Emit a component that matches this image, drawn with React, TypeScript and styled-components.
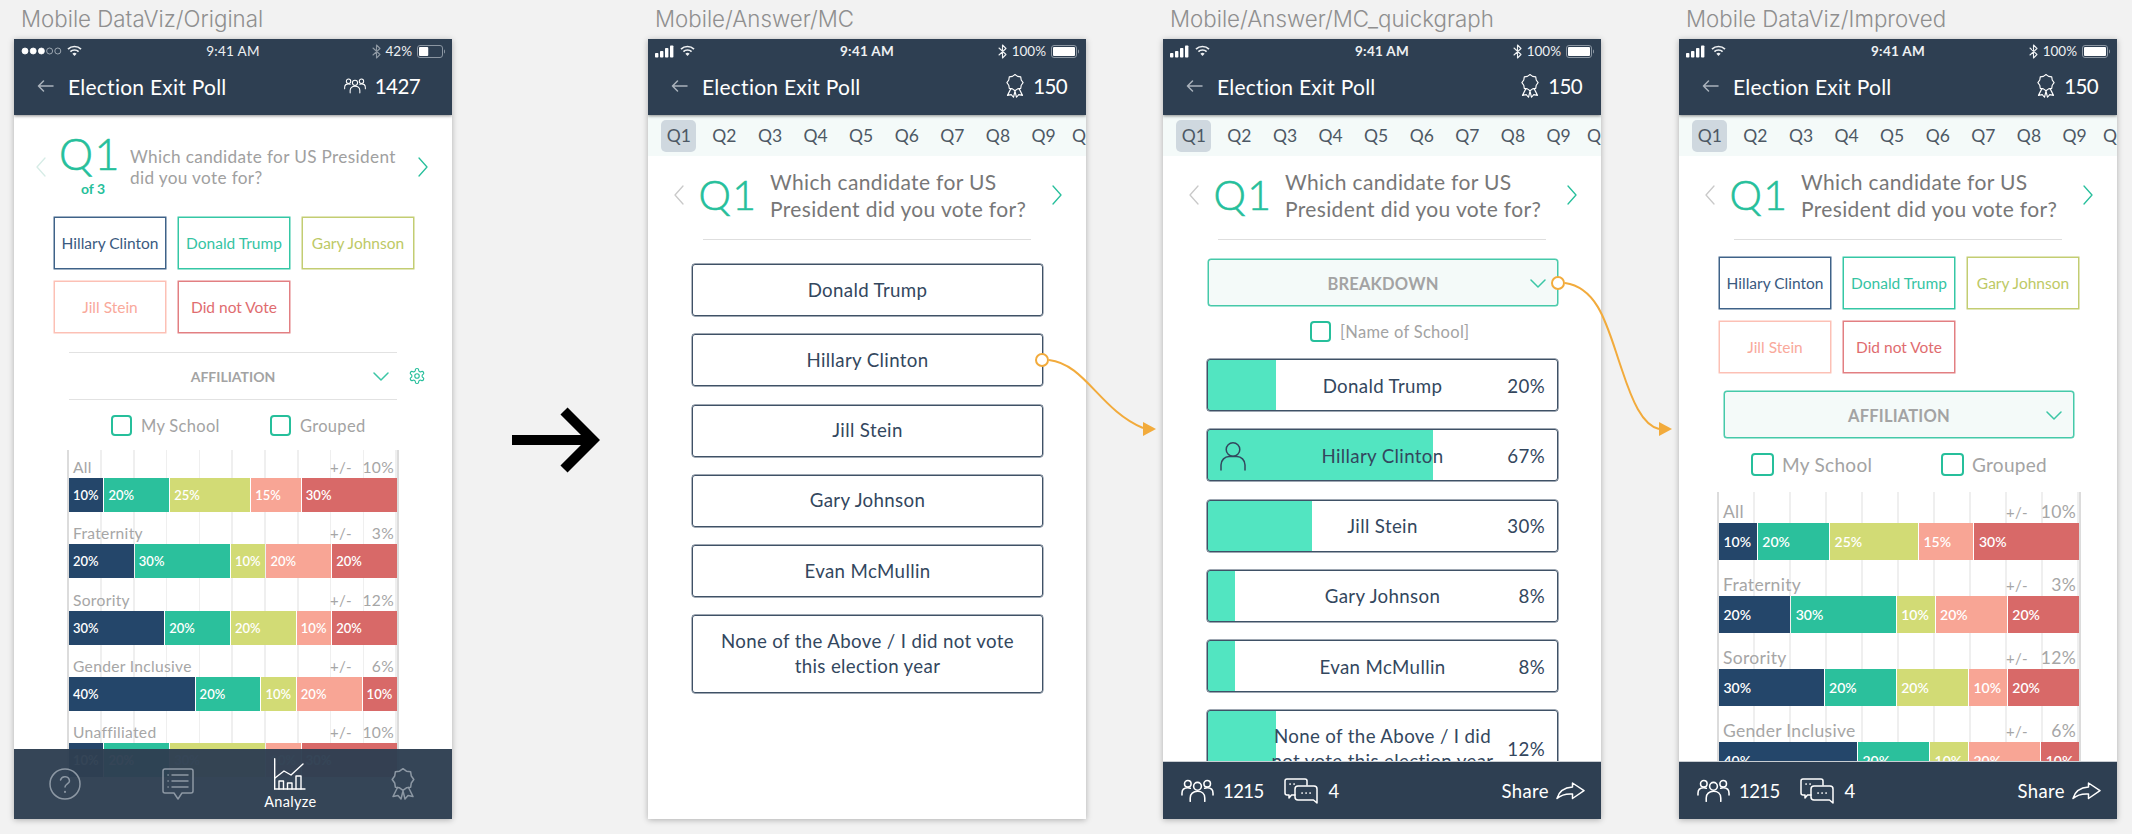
import React from 'react';
import styled, { createGlobalStyle } from 'styled-components';

const GlobalStyle = createGlobalStyle`
  html, body {
    margin: 0;
    padding: 0;
    background: #f2f2f2;
    font-family: 'Lato', 'Liberation Sans', sans-serif;
  }
  * { box-sizing: border-box; }
`;

const NAVY = '#2e3f52';
const TEAL = '#26bf9b';
const ORANGE = '#f2ab3c';

const Page = styled.div`
  position: relative;
  width: 2132px;
  height: 834px;
  overflow: hidden;
  display: flex;
  padding-left: 14px;
  background: #f2f2f2;
`;

const Column = styled.div<{ $gap?: number }>`
  width: 438px;
  flex: none;
  margin-left: ${({ $gap }) => $gap || 0}px;
`;

const BoardLabel = styled.div`
  height: 39px;
  padding: 7px 0 0 7px;
  font-family: 'Inter', sans-serif;
  font-size: 22.3px;
  font-weight: 300;
  line-height: 24px;
  color: #8f8f8f;
  white-space: nowrap;
`;

const Artboard = styled.div`
  position: relative;
  height: 780px;
  background: #fff;
  box-shadow: 0 1px 6px rgba(0, 0, 0, 0.28);
  display: flex;
  flex-direction: column;
  overflow: hidden;
`;

const BigArrowSlot = styled.div`
  width: 196px;
  flex: none;
  display: flex;
  justify-content: center;
  padding: 407px 0 0 11px;
`;

const Overlay = styled.svg`
  position: absolute;
  left: 0;
  top: 0;
  pointer-events: none;
`;

const Header = styled.div`
  height: 76px;
  flex: none;
  background: ${NAVY};
  box-shadow: 0 1px 3px rgba(0, 0, 0, 0.45);
  position: relative;
  z-index: 2;
  color: #fff;
`;

const StatusBar = styled.div`
  height: 24px;
  padding: 0 7px;
  display: grid;
  grid-template-columns: 1fr auto 1fr;
  align-items: center;
  font-size: 13.5px;
  color: #eef1f3;
`;

const StatusGroup = styled.div<{ $right?: boolean }>`
  display: flex;
  align-items: center;
  gap: 5px;
  justify-content: ${({ $right }) => ($right ? 'flex-end' : 'flex-start')};
`;

const Time = styled.span<{ $strong?: boolean }>`
  font-weight: ${({ $strong }) => ($strong ? 700 : 400)};
  letter-spacing: 0.3px;
`;

const TitleRow = styled.div<{ $wide?: boolean }>`
  height: 46px;
  display: flex;
  align-items: center;
  padding: 0 ${({ $wide }) => ($wide ? 32 : 19)}px 0 23px;
`;

const BackSlot = styled.div`
  width: 31px;
  color: #aab3bc;
  display: flex;
`;

const Title = styled.div`
  flex: 1;
  font-size: 21px;
  letter-spacing: 0.25px;
`;

const Score = styled.div`
  display: flex;
  align-items: center;
  gap: 9px;
  font-size: 20.5px;
  letter-spacing: -0.6px;
`;

const TabStrip = styled.div`
  height: 41px;
  flex: none;
  background: #f4faf9;
  display: flex;
  align-items: center;
  padding-left: 8px;
  overflow: hidden;
`;

const Tab = styled.div`
  width: 45.6px;
  flex: none;
  display: flex;
  justify-content: center;
`;

const TabLabel = styled.span<{ $active?: boolean }>`
  width: 35px;
  height: 32px;
  flex: none;
  display: flex;
  align-items: center;
  justify-content: center;
  border-radius: 5px;
  font-size: 17.5px;
  white-space: nowrap;
  color: #4d5864;
  background: ${({ $active }) => ($active ? '#cfd8df' : 'transparent')};
`;

const Body = styled.div`
  flex: 1;
  min-height: 0;
  overflow: hidden;
`;

const QuestionRow = styled.div<{ $compact?: boolean }>`
  display: grid;
  align-items: center;
  grid-template-columns: ${({ $compact }) => ($compact ? '28px 66px 1fr 34px' : '28px 68px 1fr 34px')};
  padding: ${({ $compact }) => ($compact ? '22px 0 20px 22px' : '0 0 5px 26px')};
  height: ${({ $compact }) => ($compact ? '102px' : '83px')};
`;

const QBlock = styled.div`
  display: flex;
  flex-direction: column;
  align-items: center;
  width: 52px;
  color: ${TEAL};
`;

const QNumber = styled.div<{ $compact?: boolean }>`
  font-size: ${({ $compact }) => ($compact ? 43 : 41)}px;
  line-height: 44px;
  font-weight: 300;
  -webkit-text-stroke: 0.6px ${TEAL};
  letter-spacing: 1.5px;
  margin-top: ${({ $compact }) => ($compact ? -6 : 0)}px;
`;

const OfTotal = styled.div`
  font-size: 14px;
  line-height: 16px;
  font-weight: 700;
  padding-left: 6px;
  margin-top: 5px;
`;

const QuestionText = styled.div<{ $compact?: boolean }>`
  font-size: ${({ $compact }) => ($compact ? 17.2 : 21)}px;
  line-height: ${({ $compact }) => ($compact ? 21 : 27)}px;
  letter-spacing: 0.35px;
  white-space: pre-line;
  color: ${({ $compact }) => ($compact ? '#a0a0a0' : '#777')};
`;

const Divider = styled.div`
  height: 1px;
  margin: 0 55px;
  background: #dedede;
`;

const ChipGrid = styled.div<{ $top: number }>`
  display: grid;
  grid-template-columns: repeat(3, 112px);
  grid-auto-rows: 52px;
  gap: 12px;
  padding-left: 40px;
  margin-top: ${({ $top }) => $top}px;
`;

const Chip = styled.div<{ $border: string; $text: string }>`
  display: flex;
  align-items: center;
  justify-content: center;
  border: 1px solid ${({ $border }) => $border};
  box-shadow: 0 0 0 0.5px ${({ $border }) => $border};
  color: ${({ $text }) => $text};
  font-size: 15.5px;
  white-space: nowrap;
`;

const LineSelectRow = styled.div`
  display: flex;
  align-items: center;
  margin: 19px 0 0 55px;
`;

const LineSelect = styled.div`
  width: 328px;
  height: 48px;
  padding: 0 8px;
  border-top: 1.5px solid #e2e2e2;
  border-bottom: 1.5px solid #e2e2e2;
  display: grid;
  grid-template-columns: 1fr auto 1fr;
  align-items: center;
  font-size: 14px;
  font-weight: 700;
  color: #a3a3a3;
`;

const ChevronSlot = styled.div`
  justify-self: end;
  display: flex;
`;

const GearSlot = styled.div`
  margin-left: 11px;
  color: ${TEAL};
  display: flex;
`;

const BoxSelect = styled.div<{ $top: number }>`
  height: 47px;
  margin: ${({ $top }) => $top}px 43px 0 45px;
  padding: 2px 11px 0;
  background: #f4faf9;
  border: 1px solid #45c9a9;
  box-shadow: 0 0 0 0.5px #45c9a9;
  border-radius: 3px;
  display: grid;
  grid-template-columns: 1fr auto 1fr;
  align-items: center;
  font-size: 16.5px;
  font-weight: 700;
  letter-spacing: 0.2px;
  color: #a3a3a3;
`;

const CheckRow = styled.div<{ $left: number; $top: number; $gap?: number }>`
  display: flex;
  align-items: center;
  gap: ${({ $gap }) => $gap || 0}px;
  padding-left: ${({ $left }) => $left}px;
  margin-top: ${({ $top }) => $top}px;
`;

const CheckItem = styled.label<{ $large?: boolean; $width?: number }>`
  display: flex;
  align-items: center;
  gap: ${({ $large }) => ($large ? 8 : 9)}px;
  width: ${({ $width }) => ($width ? `${$width}px` : 'auto')};
  font-size: ${({ $large }) => ($large ? 19 : 16.5)}px;
  letter-spacing: 0.3px;
  white-space: nowrap;
  color: #a3a3a3;
`;

const CheckBox = styled.span<{ $large?: boolean }>`
  width: ${({ $large }) => ($large ? 23 : 21)}px;
  height: ${({ $large }) => ($large ? 23 : 21)}px;
  flex: none;
  border: 2px solid ${TEAL};
  border-radius: 4px;
`;

const Chart = styled.div<{ $large?: boolean; $top: number }>`
  width: ${({ $large }) => ($large ? 364 : 332)}px;
  margin: ${({ $top }) => $top}px 0 0 ${({ $large }) => ($large ? 38 : 53)}px;
  border-left: 2px solid #dcdcdc;
  border-right: 2px solid #dcdcdc;
  background: repeating-linear-gradient(
    90deg,
    transparent 0,
    transparent ${({ $large }) => ($large ? 34.5 : 31.3)}px,
    #efefef ${({ $large }) => ($large ? 34.5 : 31.3)}px,
    #efefef ${({ $large }) => ($large ? 36 : 32.8)}px
  );
`;

const ChartRow = styled.div``;

const RowHead = styled.div<{ $large?: boolean; $first?: boolean }>`
  height: ${({ $large, $first }) => ($large ? ($first ? 31 : 36) : $first ? 28 : 32.3)}px;
  padding: 0 3px 0 4px;
  display: flex;
  align-items: flex-end;
  font-size: ${({ $large }) => ($large ? 17.5 : 15.6)}px;
  line-height: 22px;
  letter-spacing: 0.3px;
  color: #a6a6a6;
`;

const RowName = styled.span`
  flex: 1;
  white-space: nowrap;
`;

const RowMargin = styled.span<{ $large?: boolean }>`
  width: ${({ $large }) => ($large ? 34 : 32)}px;
  font-size: 15px;
`;

const RowValue = styled.span<{ $large?: boolean }>`
  width: ${({ $large }) => ($large ? 36 : 32)}px;
  text-align: right;
`;

const Bar = styled.div<{ $large?: boolean }>`
  height: ${({ $large }) => ($large ? 37 : 34)}px;
  display: flex;
  gap: 1px;
`;

const Segment = styled.div<{ $share: number; $color: string; $large?: boolean }>`
  flex: ${({ $share }) => $share} 0 0;
  min-width: 0;
  background: ${({ $color }) => $color};
  display: flex;
  align-items: center;
  padding-left: ${({ $large }) => ($large ? 4.5 : 4)}px;
  font-size: ${({ $large }) => ($large ? 14 : 13)}px;
  font-weight: 600;
  color: #fff;
  white-space: nowrap;
`;

const CardList = styled.div<{ $top: number }>`
  display: flex;
  flex-direction: column;
  gap: 18.3px;
  margin: ${({ $top }) => $top}px 0 0 44px;
  width: 351px;
`;

const AnswerCard = styled.div<{ $tall?: boolean }>`
  height: ${({ $tall }) => ($tall ? 78 : 52)}px;
  padding: 0 22px;
  display: flex;
  align-items: center;
  justify-content: center;
  text-align: center;
  border: 1px solid #3f5166;
  box-shadow: 0 0 0 0.4px #3f5166;
  border-radius: 3px;
  font-size: 18.7px;
  line-height: 25px;
  letter-spacing: 0.35px;
  color: #33475e;
`;

const ResultCard = styled.div<{ $fill: number; $tall?: boolean }>`
  flex: none;
  height: ${({ $tall }) => ($tall ? 76 : 52)}px;
  padding: 2px 12px 0;
  display: grid;
  grid-template-columns: 1fr auto 1fr;
  align-items: center;
  border: 1px solid #3f5166;
  box-shadow: 0 0 0 0.5px #3f5166;
  border-radius: 3px;
  background: linear-gradient(90deg, #52e5c1 ${({ $fill }) => $fill}%, #fff ${({ $fill }) => $fill}%);
  font-size: 18.7px;
  line-height: 25px;
  letter-spacing: 0.35px;
  color: #33475e;
`;

const ResultName = styled.div`
  max-width: 224px;
  text-align: center;
`;

const ResultPct = styled.div`
  grid-column: 3;
  justify-self: end;
`;

const PersonSlot = styled.div`
  display: flex;
  color: #33475e;
`;

const TabBar = styled.div`
  position: absolute;
  left: 0;
  right: 0;
  bottom: 0;
  height: 70px;
  padding: 0 33px 0 35px;
  background: rgba(46, 63, 82, 0.97);
  display: flex;
  align-items: center;
  justify-content: space-between;
  color: #8d98a4;
`;

const TabItem = styled.div<{ $active?: boolean }>`
  width: 32px;
  display: flex;
  flex-direction: column;
  align-items: center;
  color: ${({ $active }) => ($active ? '#fff' : 'inherit')};
`;

const TabCaption = styled.div`
  margin-top: 3px;
  font-size: 14.5px;
  line-height: 17px;
  letter-spacing: 0.3px;
`;

const Footer = styled.div`
  height: 58px;
  flex: none;
  padding: 0 16px 0 18px;
  background: ${NAVY};
  border-top: 1px solid #c9ced3;
  display: flex;
  align-items: center;
  font-size: 18.5px;
  letter-spacing: 0.4px;
  color: #fff;
`;

const FooterStat = styled.div<{ $gap: number; $left?: number }>`
  display: flex;
  align-items: center;
  gap: ${({ $gap }) => $gap}px;
  margin-left: ${({ $left }) => $left || 0}px;
  letter-spacing: -0.6px;
`;

const ShareButton = styled.div`
  margin-left: auto;
  display: flex;
  align-items: center;
  gap: 7px;
`;

const line = {
  fill: 'none',
  stroke: 'currentColor',
  strokeLinecap: 'round' as const,
  strokeLinejoin: 'round' as const,
};

const ChevronSide = ({ dir, color }: { dir: 'left' | 'right'; color: string }) => (
  <svg width="10" height="20" viewBox="0 0 10 20" style={{ color }}>
    <polyline {...line} strokeWidth="1.3" points={dir === 'left' ? '9,1 1,10 9,19' : '1,1 9,10 1,19'} />
  </svg>
);

const ChevronDown = () => (
  <svg width="16" height="9" viewBox="0 0 16 9" style={{ color: '#3cc6a6' }}>
    <polyline {...line} strokeWidth="1.5" points="1,1 8,8 15,1" />
  </svg>
);

const BackArrow = () => (
  <svg width="17" height="12" viewBox="0 0 17 12">
    <path {...line} strokeWidth="1.5" d="M16 6H1.5M6.5 1 1.5 6l5 5" />
  </svg>
);

const Wifi = () => (
  <svg width="15" height="12" viewBox="0 0 15 12">
    <g {...line} strokeWidth="1.7" strokeLinecap="butt">
      <path d="M1 4.2a9.2 9.2 0 0 1 13 0" />
      <path d="M3.4 6.7a5.8 5.8 0 0 1 8.2 0" />
    </g>
    <path fill="currentColor" d="M5.4 8.8a3 3 0 0 1 4.2 0L7.5 11z" />
  </svg>
);

const Bluetooth = ({ dim }: { dim?: boolean }) => (
  <svg width="9" height="15" viewBox="0 0 9 15" style={{ opacity: dim ? 0.5 : 1 }}>
    <polyline {...line} strokeWidth="1.1" points="1,4 8,10.5 4.5,14 4.5,1 8,4.5 1,11" />
  </svg>
);

const Battery = ({ level }: { level: number }) => (
  <svg width="28" height="13" viewBox="0 0 28 13">
    <rect x="0.5" y="0.5" width="25" height="12" rx="2.5" fill="none" stroke="#8b96a2" />
    <rect x="2" y="2" width={22 * level} height="9" rx="1" fill="#fff" />
    <path d="M27 4.5v4c.7 0 1-.8 1-2s-.3-2-1-2z" fill="#8b96a2" />
  </svg>
);

const CarrierDots = () => (
  <svg width="41" height="8" viewBox="0 0 41 8">
    {[0, 1, 2, 3, 4].map((i) => (
      <circle
        key={i}
        cx={4 + i * 8.2}
        cy="4"
        r="3"
        fill={i < 3 ? '#fff' : 'none'}
        stroke={i < 3 ? '#fff' : '#b8c0c8'}
        strokeWidth="0.8"
      />
    ))}
  </svg>
);

const SignalBars = () => (
  <svg width="20" height="13" viewBox="0 0 20 13" fill="#fff">
    <rect x="0" y="8" width="3.4" height="4.5" rx="0.8" />
    <rect x="5" y="6" width="3.4" height="6.5" rx="0.8" />
    <rect x="10" y="3" width="3.4" height="9.5" rx="0.8" />
    <rect x="15" y="0.5" width="3.4" height="12" rx="0.8" />
  </svg>
);

const People = ({ width = 33 }: { width?: number }) => (
  <svg width={width} height={(width * 24) / 34} viewBox="0 0 34 24">
    <g {...line} strokeWidth="1.6">
      <circle cx="17" cy="7.5" r="4" />
      <path d="M9.5 23v-3.5c0-4 3-6.8 7.5-6.8s7.5 2.8 7.5 6.8V23" />
      <circle cx="7" cy="5" r="3.4" />
      <path d="M1 16.5v-1.8c0-3.4 2.4-5.6 6-5.6.9 0 1.8.2 2.6.5" />
      <circle cx="27" cy="5" r="3.4" />
      <path d="M33 16.5v-1.8c0-3.4-2.4-5.6-6-5.6-.9 0-1.8.2-2.6.5" />
    </g>
  </svg>
);

const scallop = Array.from({ length: 16 }, (_, i) => {
  const a = (i * Math.PI) / 8 - Math.PI / 2;
  const r = i % 2 === 0 ? 10.8 : 9;
  return `${(12 + r * Math.cos(a)).toFixed(2)},${(11.5 + r * Math.sin(a)).toFixed(2)}`;
}).join(' ');

const Ribbon = ({ height = 24, weight = 1.5 }: { height?: number; weight?: number }) => (
  <svg width={(height * 24) / 32} height={height} viewBox="0 0 24 32">
    <g {...line} strokeWidth={weight}>
      <polygon points={scallop} />
      <path d="M6.5 19.5 2 28.5l5-1 3 3.5 2-8 2 8 3-3.5 5 1-4.5-9" />
    </g>
  </svg>
);

const Question = () => (
  <svg width="32" height="32" viewBox="0 0 32 32">
    <g {...line} strokeWidth="1.5">
      <circle cx="16" cy="16" r="15" />
      <path d="M11.5 12a4.6 4.6 0 0 1 9 1c0 2.6-4.5 3.2-4.5 6" />
      <path d="M16 23.8v.2" strokeWidth="2" />
    </g>
  </svg>
);

const MessageList = () => (
  <svg width="32" height="32" viewBox="0 0 32 32">
    <g {...line} strokeWidth="1.5">
      <path d="M3 1h26a2 2 0 0 1 2 2v20a2 2 0 0 1-2 2h-9l-4 6-4-6H3a2 2 0 0 1-2-2V3a2 2 0 0 1 2-2z" />
      <path d="M10 7h16M10 13h16M10 19h16M6 7h.2M6 13h.2M6 19h.2" />
    </g>
  </svg>
);

const Analyze = () => (
  <svg width="32" height="32" viewBox="0 0 32 32">
    <g {...line} strokeWidth="1.4">
      <path d="M.7.7v30.6M.7 31H31" />
      <polyline points="1,20 10,13 17,17 29,6" />
      <path d="M5 31v-8h4.5v8M13.5 31v-6H18v6M22 31V18h5v13" />
    </g>
  </svg>
);

const Chat = () => (
  <svg width="34" height="26" viewBox="0 0 34 26">
    <g {...line} strokeWidth="1.5">
      <path d="M11 17H7.5L5 20v-3H3a2 2 0 0 1-2-2V3a2 2 0 0 1 2-2h18a2 2 0 0 1 2 2v4" />
      <path d="M14 8h16a3 3 0 0 1 3 3v14l-3.5-3H14a3 3 0 0 1-3-3v-8a3 3 0 0 1 3-3z" />
      <path d="M18 15h.2M22 15h.2M26 15h.2M6 6h.2M10 6h.2" strokeWidth="1.7" />
    </g>
  </svg>
);

const ShareArrow = () => (
  <svg width="29" height="18" viewBox="0 0 29 18">
    <path {...line} strokeWidth="1.5" d="M1 16.5C3 9 9 5.5 16.5 5V1L28 8.7 16.5 16.5V12C10 11.5 5 13 1 16.5z" />
  </svg>
);

const Person = () => (
  <svg width="26" height="30" viewBox="0 0 26 30">
    <g {...line} strokeWidth="1.5">
      <circle cx="13" cy="8.5" r="6.8" />
      <path d="M1 29v-5c0-5 4-8.5 8-8.5h8c4 0 8 3.5 8 8.5v5" />
    </g>
  </svg>
);

const Gear = () => (
  <svg width="18" height="18" viewBox="0 0 24 24">
    <g {...line} strokeWidth="1.5">
      <circle cx="12" cy="12" r="3" />
      <path d="M12.2 2h-.4a2 2 0 0 0-2 2v.2a2 2 0 0 1-1 1.7l-.4.3a2 2 0 0 1-2 0l-.2-.1a2 2 0 0 0-2.7.7l-.2.4a2 2 0 0 0 .7 2.7l.2.1a2 2 0 0 1 1 1.7v.6a2 2 0 0 1-1 1.7l-.2.1a2 2 0 0 0-.7 2.7l.2.4a2 2 0 0 0 2.7.7l.2-.1a2 2 0 0 1 2 0l.4.3a2 2 0 0 1 1 1.7v.2a2 2 0 0 0 2 2h.4a2 2 0 0 0 2-2v-.2a2 2 0 0 1 1-1.7l.4-.3a2 2 0 0 1 2 0l.2.1a2 2 0 0 0 2.7-.7l.2-.4a2 2 0 0 0-.7-2.7l-.2-.1a2 2 0 0 1-1-1.7v-.6a2 2 0 0 1 1-1.7l.2-.1a2 2 0 0 0 .7-2.7l-.2-.4a2 2 0 0 0-2.7-.7l-.2.1a2 2 0 0 1-2 0l-.4-.3a2 2 0 0 1-1-1.7V4a2 2 0 0 0-2-2z" />
    </g>
  </svg>
);

const AppHeader = ({ original }: { original?: boolean }) => (
  <Header>
    <StatusBar>
      <StatusGroup>
        {original ? <CarrierDots /> : <SignalBars />}
        <Wifi />
      </StatusGroup>
      <Time $strong={!original}>9:41 AM</Time>
      <StatusGroup $right>
        <Bluetooth dim={original} />
        <span>{original ? '42%' : '100%'}</span>
        <Battery level={original ? 0.42 : 1} />
      </StatusGroup>
    </StatusBar>
    <TitleRow $wide={original}>
      <BackSlot>
        <BackArrow />
      </BackSlot>
      <Title>Election Exit Poll</Title>
      <Score>
        {original ? <People width={22} /> : <Ribbon />}
        {original ? '1427' : '150'}
      </Score>
    </TitleRow>
  </Header>
);

const QuestionTabs = () => (
  <TabStrip>
    {Array.from({ length: 10 }, (_, i) => (
      <Tab key={i}>
        <TabLabel $active={i === 0}>Q{i + 1}</TabLabel>
      </Tab>
    ))}
  </TabStrip>
);

const QuestionHead = ({ compact }: { compact?: boolean }) => (
  <QuestionRow $compact={compact}>
    <ChevronSide dir="left" color={compact ? '#d6ece6' : '#c9c9c9'} />
    <QBlock>
      <QNumber $compact={compact}>Q1</QNumber>
      {compact && <OfTotal>of 3</OfTotal>}
    </QBlock>
    <QuestionText $compact={compact}>
      {compact ? 'Which candidate for US President\ndid you vote for?' : 'Which candidate for US\nPresident did you vote for?'}
    </QuestionText>
    <ChevronSide dir="right" color={TEAL} />
  </QuestionRow>
);

const candidates = [
  { name: 'Hillary Clinton', border: '#3f6288', text: '#3a5a80' },
  { name: 'Donald Trump', border: '#35c7a5', text: '#35c4a3' },
  { name: 'Gary Johnson', border: '#c3cd72', text: '#bdc965' },
  { name: 'Jill Stein', border: '#fcc0b5', text: '#f9a99b' },
  { name: 'Did not Vote', border: '#e27f82', text: '#df6c6f' },
];

const CandidateChips = ({ top }: { top: number }) => (
  <ChipGrid $top={top}>
    {candidates.map((c) => (
      <Chip key={c.name} $border={c.border} $text={c.text}>
        {c.name}
      </Chip>
    ))}
  </ChipGrid>
);

const segmentColors = ['#24466a', '#2bc09c', '#d2db75', '#f8a595', '#d86968'];

const chartRows = [
  { name: 'All', margin: '10%', shares: [10, 20, 25, 15, 30] },
  { name: 'Fraternity', margin: '3%', shares: [20, 30, 10, 20, 20] },
  { name: 'Sorority', margin: '12%', shares: [30, 20, 20, 10, 20] },
  { name: 'Gender Inclusive', margin: '6%', shares: [40, 20, 10, 20, 10] },
  { name: 'Unaffiliated', margin: '10%', shares: [10, 20, 30, 10, 30] },
];

const StackedChart = ({ large, top }: { large?: boolean; top: number }) => (
  <Chart $large={large} $top={top}>
    {chartRows.map((row, i) => (
      <ChartRow key={row.name}>
        <RowHead $large={large} $first={i === 0}>
          <RowName>{row.name}</RowName>
          <RowMargin $large={large}>+/-</RowMargin>
          <RowValue $large={large}>{row.margin}</RowValue>
        </RowHead>
        <Bar $large={large}>
          {row.shares.map((share, j) => (
            <Segment key={j} $share={share} $color={segmentColors[j]} $large={large}>
              {share}%
            </Segment>
          ))}
        </Bar>
      </ChartRow>
    ))}
  </Chart>
);

const answers = [
  'Donald Trump',
  'Hillary Clinton',
  'Jill Stein',
  'Gary Johnson',
  'Evan McMullin',
  'None of the Above / I did not vote this election year',
];

const results = [
  { name: answers[0], pct: '20%', fill: 19.6 },
  { name: answers[1], pct: '67%', fill: 64.6, mine: true },
  { name: answers[2], pct: '30%', fill: 29.7 },
  { name: answers[3], pct: '8%', fill: 7.8 },
  { name: answers[4], pct: '8%', fill: 7.8 },
  { name: answers[5], pct: '12%', fill: 19.6, tall: true },
];

const PollFooter = () => (
  <Footer>
    <FooterStat $gap={9}>
      <People />
      1215
    </FooterStat>
    <FooterStat $gap={11} $left={20}>
      <Chat />4
    </FooterStat>
    <ShareButton>
      Share
      <ShareArrow />
    </ShareButton>
  </Footer>
);

const Board = ({ name, gap, children }: { name: string; gap?: number; children: React.ReactNode }) => (
  <Column $gap={gap}>
    <BoardLabel>{name}</BoardLabel>
    <Artboard>{children}</Artboard>
  </Column>
);

const App = () => (
  <>
    <GlobalStyle />
    <Page>
      <Board name="Mobile DataViz/Original">
        <AppHeader original />
        <Body>
          <QuestionHead compact />
          <CandidateChips top={0} />
          <LineSelectRow>
            <LineSelect>
              <span />
              AFFILIATION
              <ChevronSlot>
                <ChevronDown />
              </ChevronSlot>
            </LineSelect>
            <GearSlot>
              <Gear />
            </GearSlot>
          </LineSelectRow>
          <CheckRow $left={97} $top={15} $gap={53}>
            <CheckItem $width={106}>
              <CheckBox />
              My School
            </CheckItem>
            <CheckItem>
              <CheckBox />
              Grouped
            </CheckItem>
          </CheckRow>
          <StackedChart top={14} />
        </Body>
        <TabBar>
          <TabItem>
            <Question />
          </TabItem>
          <TabItem>
            <MessageList />
          </TabItem>
          <TabItem $active>
            <Analyze />
            <TabCaption>Analyze</TabCaption>
          </TabItem>
          <TabItem>
            <Ribbon height={32} />
          </TabItem>
        </TabBar>
      </Board>

      <BigArrowSlot>
        <svg width="88" height="66" viewBox="0 0 88 66">
          <path d="M0 33h82M52 4l29 29-29 29" fill="none" stroke="#000" strokeWidth="10" />
        </svg>
      </BigArrowSlot>

      <Board name="Mobile/Answer/MC">
        <AppHeader />
        <QuestionTabs />
        <Body>
          <QuestionHead />
          <Divider />
          <CardList $top={24}>
            {answers.map((a, i) => (
              <AnswerCard key={a} $tall={i === 5}>
                {a}
              </AnswerCard>
            ))}
          </CardList>
        </Body>
      </Board>

      <Board name="Mobile/Answer/MC_quickgraph" gap={77}>
        <AppHeader />
        <QuestionTabs />
        <Body>
          <QuestionHead />
          <Divider />
          <BoxSelect $top={19}>
            <span />
            BREAKDOWN
            <ChevronSlot>
              <ChevronDown />
            </ChevronSlot>
          </BoxSelect>
          <CheckRow $left={147} $top={15}>
            <CheckItem>
              <CheckBox />
              [Name of School]
            </CheckItem>
          </CheckRow>
          <CardList $top={17}>
            {results.map((r) => (
              <ResultCard key={r.name} $fill={r.fill} $tall={r.tall}>
                <PersonSlot>{r.mine && <Person />}</PersonSlot>
                <ResultName>{r.name}</ResultName>
                <ResultPct>{r.pct}</ResultPct>
              </ResultCard>
            ))}
          </CardList>
        </Body>
        <PollFooter />
      </Board>

      <Board name="Mobile DataViz/Improved" gap={78}>
        <AppHeader />
        <QuestionTabs />
        <Body>
          <QuestionHead />
          <Divider />
          <CandidateChips top={17} />
          <BoxSelect $top={18}>
            <span />
            AFFILIATION
            <ChevronSlot>
              <ChevronDown />
            </ChevronSlot>
          </BoxSelect>
          <CheckRow $left={72} $top={15} $gap={63}>
            <CheckItem $large $width={127}>
              <CheckBox $large />
              My School
            </CheckItem>
            <CheckItem $large>
              <CheckBox $large />
              Grouped
            </CheckItem>
          </CheckRow>
          <StackedChart large top={16} />
        </Body>
        <PollFooter />
      </Board>

      <Overlay width="2132" height="834" viewBox="0 0 2132 834">
        <g fill="none" stroke={ORANGE} strokeWidth="2">
          <path d="M1049 360C1085 364 1100 410 1143 428" />
          <circle cx="1042" cy="360" r="6" fill="#fff" />
          <path d="M1565 283C1600 288 1608 330 1622 370C1632 400 1642 425 1659 429" />
          <circle cx="1558" cy="283" r="6" fill="#fff" />
        </g>
        <polygon points="1143,422 1156,429 1143,436" fill={ORANGE} />
        <polygon points="1659,422 1672,429 1659,436" fill={ORANGE} />
      </Overlay>
    </Page>
  </>
);

export default App;
